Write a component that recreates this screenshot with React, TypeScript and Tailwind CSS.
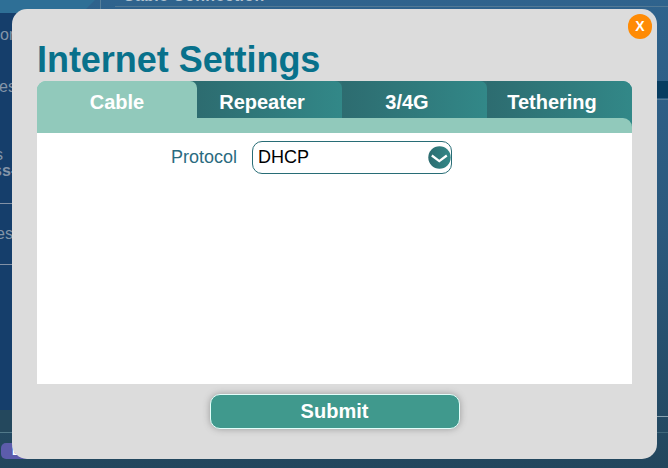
import type { ReactNode } from "react";

function Tab({ label, last = false }: { label: string; last?: boolean }) {
  return (
    <div className="h-[37px] w-[145px] bg-[#2f6f73]">
      <div
        className={`flex h-full items-center justify-center bg-linear-to-r from-[#2d6c70] to-[#328888] pt-[5px] pr-[15px] ${last ? "pr-[14px]" : "rounded-tr-[7px]"}`}
      >
        {label}
      </div>
    </div>
  );
}

function SideText({ children, className }: { children: ReactNode; className: string }) {
  return <div className={`flex w-[100px] text-base leading-4 whitespace-nowrap ${className}`}>{children}</div>;
}

function Backdrop() {
  return (
    <div className="flex h-full bg-linear-to-b from-[#2f638d] via-[#2b587c] to-[#22465d] text-[#8495a8]">
      <div className="flex h-full w-[100px] shrink-0 flex-col">
        <div className="h-[13px] bg-[#2e6f96] [clip-path:polygon(0_0,95px_0,82px_100%,0_100%)]" />
        <div className="h-[397px] bg-[#153e6b]">
          <SideText className="mt-[14px]">or</SideText>
          <SideText className="mt-[36px]"><span className="-ml-px">es</span></SideText>
          <SideText className="mt-[52px]"><span className="-ml-[5px]">s</span></SideText>
          <SideText className="font-bold"><span className="-ml-[7px]">ss-</span></SideText>
          <div className="mt-[24px] h-px bg-[#8291a6]" />
          <SideText className="mt-[22px]"><span className="-ml-1">es</span></SideText>
          <div className="mt-[22px] h-px bg-[#8291a6]" />
        </div>
        <div className="h-[23px] border-b border-[#52798a] bg-[#24485d]" />
        <div className="mt-[10px] ml-px h-[16px] w-16 rounded-[5px] bg-[#5c5cab] pl-[11px] text-xs font-bold text-white">L</div>
      </div>
      <div className="flex h-[440px] flex-1 flex-col border-l border-[#557f9b]">
        <div className="ml-[14px] h-[7px] overflow-hidden border-b border-[#527995] text-[#b1c2d0]">
          <div className="-mt-[14px] ml-[8px] text-base leading-5 font-bold tracking-[0.35px]">Cable Connection</div>
        </div>
        <div className="mt-[74px] h-[17px] bg-[#073c60]" />
        <div className="mt-px h-px bg-[#537995]" />
        <div className="mt-[316px] h-px bg-[#8aa2b0]" />
        <div className="mt-[15px] h-px bg-[#40677b]" />
      </div>
    </div>
  );
}

export default function App() {
  return (
    <main className="relative h-[468px] w-[668px] overflow-hidden [font-family:'Liberation_Sans',Arial,sans-serif]">
      <Backdrop />
      <section className="absolute top-[9px] left-3 h-[450px] w-[645px] rounded-[15px] bg-[#dcdcdc] px-[25px] pt-[30px]">
        <button className="absolute top-[5px] right-[5px] flex h-[25px] w-6 items-center justify-center rounded-full bg-[#ff8b05] pb-px text-sm leading-none font-bold text-white">
          X
        </button>
        <h1 className="h-[42px] text-[36px] leading-[42px] font-bold tracking-[-0.04px] whitespace-nowrap text-[#08718b]">Internet Settings</h1>
        <div className="h-[303px] w-[595px] rounded-t-[9px] bg-white">
          <div className="rounded-t-[9px] bg-linear-to-r from-[#91c9bb] from-50% to-[#328888] to-50% text-[20px] leading-6 font-bold text-white">
            <nav className="flex h-[37px] overflow-hidden rounded-t-[9px]">
              <div className="h-[37px] w-[160px] bg-linear-to-r from-[#91c9bb] from-50% to-[#2d6c70] to-50%">
                <div className="flex h-full items-center justify-center rounded-tr-[7px] bg-[#91c9bb] pt-[5px]">Cable</div>
              </div>
              <Tab label="Repeater" />
              <Tab label="3/4G" />
              <Tab label="Tethering" last />
            </nav>
            <div className="h-[15px] rounded-tr-[9px] bg-[#91c9bb]" />
          </div>
          <div className="flex items-center pt-2 text-lg">
            <label className="w-[200px] pb-[2px] text-right text-[#2b6b80]">Protocol</label>
            <button className="ml-[15px] flex h-[33px] w-[200px] items-center justify-between rounded-[10px] border border-[#286d76] pl-[5px] text-black">
              <span className="pb-[2px]">DHCP</span>
              <svg className="size-[23px]" viewBox="0 0 23 23" fill="none">
                <defs>
                  <linearGradient id="arrow-disc" x1="0" y1="0" x2="1" y2="0">
                    <stop stopColor="#2d6c70" />
                    <stop offset="1" stopColor="#328888" />
                  </linearGradient>
                </defs>
                <circle cx="11.5" cy="11.5" r="11.2" fill="url(#arrow-disc)" />
                <path d="M3.8 9.5 11.3 15.2l7.5-5.7" stroke="white" strokeWidth="2.2" />
              </svg>
            </button>
          </div>
        </div>
        <button className="mt-[10px] ml-[173px] flex h-[35px] w-[250px] items-center justify-center rounded-[10px] border border-[#e2fffa] bg-[#40998d] pr-px pb-[2px] text-[20px] font-bold text-white shadow-[0_0_7px_#999]">
          Submit
        </button>
      </section>
    </main>
  );
}
